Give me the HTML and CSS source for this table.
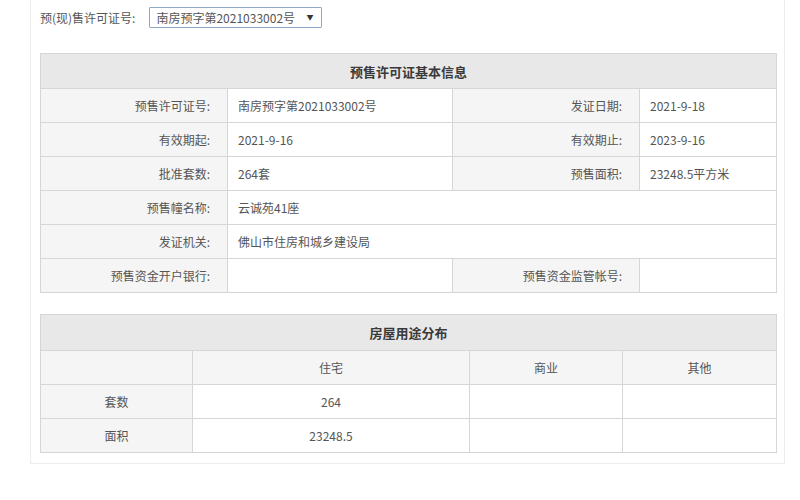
FILE: index.html
```html
<!DOCTYPE html>
<html lang="zh-CN">
<head>
<meta charset="utf-8">
<title>预售许可证</title>
<link rel="stylesheet" href="styles.css">
</head>
<body>
<div class="panel">
  <div class="picker">
    <span class="picker-label">预(现)售许可证号:</span>
    <span class="select"><span class="select-text">南房预字第2021033002号</span><span class="select-arrow">▼</span></span>
  </div>

  <table class="info">
    <colgroup>
      <col class="c1"><col class="c2"><col class="c3"><col class="c4">
    </colgroup>
    <tr><th colspan="4" class="title">预售许可证基本信息</th></tr>
    <tr><td class="lbl">预售许可证号:</td><td class="val">南房预字第2021033002号</td><td class="lbl">发证日期:</td><td class="val">2021-9-18</td></tr>
    <tr><td class="lbl">有效期起:</td><td class="val">2021-9-16</td><td class="lbl">有效期止:</td><td class="val">2023-9-16</td></tr>
    <tr><td class="lbl">批准套数:</td><td class="val">264套</td><td class="lbl">预售面积:</td><td class="val">23248.5平方米</td></tr>
    <tr><td class="lbl">预售幢名称:</td><td class="val" colspan="3">云诚苑41座</td></tr>
    <tr><td class="lbl">发证机关:</td><td class="val" colspan="3">佛山市住房和城乡建设局</td></tr>
    <tr><td class="lbl">预售资金开户银行:</td><td class="val"></td><td class="lbl">预售资金监管帐号:</td><td class="val"></td></tr>
  </table>

  <table class="usage">
    <colgroup>
      <col class="u1"><col class="u2"><col class="u3"><col class="u4">
    </colgroup>
    <tr><th colspan="4" class="title">房屋用途分布</th></tr>
    <tr class="head"><td></td><td>住宅</td><td>商业</td><td>其他</td></tr>
    <tr><td class="rowlbl">套数</td><td>264</td><td></td><td></td></tr>
    <tr><td class="rowlbl">面积</td><td>23248.5</td><td></td><td></td></tr>
  </table>
</div>
</body>
</html>
```

FILE: styles.css
```css
html, body {
  margin: 0;
  padding: 0;
  background: #fff;
}
body {
  font-family: "Noto Sans CJK SC", "Noto Sans", sans-serif;
  font-size: 12px;
  color: #555;
}
.panel {
  margin-left: 30px;
  width: 735px;
  margin-top: -1px;
  border: 1px solid #ececec;
  padding: 0 9px 10px 9px;
}
.picker {
  display: flex;
  align-items: center;
  height: 32px;
  padding-top: 1px;
}
.picker-label {
  color: #555;
  font-size: 12px;
}
.select {
  display: inline-flex;
  align-items: center;
  justify-content: space-between;
  box-sizing: border-box;
  width: 173px;
  height: 21px;
  margin-left: 14px;
  padding: 0 8px 0 6px;
  border: 1px solid #8fa9c9;
  border-radius: 1px;
  color: #555;
}
.select-arrow {
  font-size: 7px;
  color: #333;
}
table {
  border-collapse: collapse;
  table-layout: fixed;
  width: 736px;
  margin-top: 20px;
}
.usage {
  margin-top: 21px;
}
th, td {
  border: 1px solid #d6d6d6;
  padding: 0;
}
.title {
  background: #e8e8e8;
  height: 34px;
  font-weight: bold;
  font-size: 13px;
  color: #3a3a3a;
  text-align: center;
}
.usage .title {
  height: 35px;
}
.info td {
  height: 33px;
}
.lbl {
  background: #f5f5f5;
  text-align: right;
  padding-right: 17px;
}
.val {
  background: #fff;
  padding-left: 10px;
}
.c1 { width: 187px; }
.c2 { width: 225px; }
.c3 { width: 187px; }
.c4 { width: 137px; }
.u1 { width: 152px; }
.u2 { width: 277px; }
.u3 { width: 153px; }
.u4 { width: 154px; }
.usage td {
  height: 33px;
  text-align: center;
  background: #fff;
}
.usage .head td {
  background: #f5f5f5;
}
.usage td.rowlbl {
  background: #f5f5f5;
}
```
